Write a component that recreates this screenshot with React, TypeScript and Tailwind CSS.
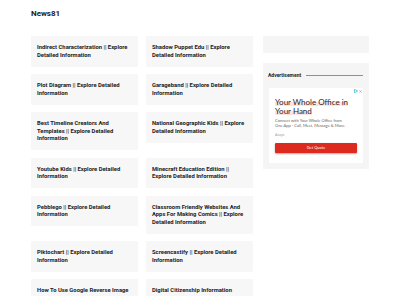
import React from "react";

const left = [
  "Indirect Characterization || Explore Detailed Information",
  "Plot Diagram || Explore Detailed Information",
  "Best Timeline Creators And Templates || Explore Detailed Information",
  "Youtube Kids || Explore Detailed Information",
  "Pebblego || Explore Detailed Information",
  "Piktochart || Explore Detailed Information",
  "How To Use Google Reverse Image Search || Explore Detailed Information",
];
const right = [
  "Shadow Puppet Edu || Explore Detailed Information",
  "Garageband || Explore Detailed Information",
  "National Geographic Kids || Explore Detailed Information",
  "Minecraft Education Edition || Explore Detailed Information",
  "Classroom Friendly Websites And Apps For Making Comics || Explore Detailed Information",
  "Screencastify || Explore Detailed Information",
  "Digital Citizenship Information",
];

function Card({ text }: { text: string }) {
  return (
    <div className="bg-[#f7f7f7] px-[6px] pt-[8px] pb-[7.5px] rounded-[1px]">
      <div className="text-[5.85px] leading-[7.5px] font-bold text-[#222222]">{text}</div>
    </div>
  );
}

export default function App() {
  const items: string[] = [];
  for (let i = 0; i < left.length; i++) {
    items.push(left[i]);
    items.push(right[i]);
  }
  return (
    <div className="min-h-[296px] bg-white font-['Roboto',sans-serif]">
      <div className="w-[338px] mx-auto pt-[9px]">
        <div className="text-[8px] leading-[10px] font-bold text-[#222222] mb-[17px]">News81</div>
        <div className="flex gap-[10px] items-start">
          <div className="w-[222px] grid grid-cols-2 gap-x-[8px] gap-y-[7.5px] items-start">
            {items.map((t, i) => (
              <Card key={i} text={t} />
            ))}
          </div>
          <div className="w-[106px] flex flex-col gap-[10px]">
            <div className="h-[17px] bg-[#f5f5f5]" />
            <div className="bg-[#f5f5f5] px-[6px] pt-[9px] pb-[6px]">
              <div className="flex items-center mb-[10px]">
                <span className="text-[5px] leading-[6px] font-bold text-[#222222] -ml-[1px]">Advertisement</span>
                <div className="flex-1 h-[1px] bg-[#ee6e4a] ml-[5px]" />
              </div>
              <div className="bg-white px-[6px] pt-[4px] pb-[10px] relative">
                <div className="absolute right-[1px] top-[1px] flex items-center gap-[1px]">
                  <svg width="4" height="4" viewBox="0 0 4 4">
                    <path d="M0.5 0.3 L3.6 2 L0.5 3.7 Z" fill="none" stroke="#29b6d6" strokeWidth="0.7" />
                  </svg>
                  <svg width="3" height="3" viewBox="0 0 3 3">
                    <path d="M0.4 0.4 L2.6 2.6 M2.6 0.4 L0.4 2.6" stroke="#29b6d6" strokeWidth="0.6" />
                  </svg>
                </div>
                <div className="pt-[5.5px] text-[8px] leading-[9px] text-[#2b2727] font-['Lato',sans-serif]">
                  <span className="bg-[linear-gradient(to_bottom,transparent_50%,#fde4e0_50%,#fde4e0_92%,transparent_92%)] [box-decoration-break:clone]">
                    Your Whole Office in Your Hand
                  </span>
                </div>
                <div className="mt-[2px] text-[4.05px] leading-[5px] text-[#666666] font-['Lato',sans-serif] whitespace-nowrap">
                  Connect with Your Whole Office from
                  <br />
                  One App - Call, Meet, Message &amp; More.
                </div>
                <div className="mt-[5px] text-[3.5px] leading-[5px] text-[#9a9a9a] font-['Lato',sans-serif]">Avaya</div>
                <div className="mt-[5px] h-[10px] rounded-[1px] bg-[#dc2a1f] shadow-[0_1px_2px_rgba(0,0,0,0.35)] flex items-center justify-center text-[4px] text-white font-['Lato',sans-serif]">
                  Get Quote
                </div>
              </div>
            </div>
          </div>
        </div>
      </div>
    </div>
  );
}
